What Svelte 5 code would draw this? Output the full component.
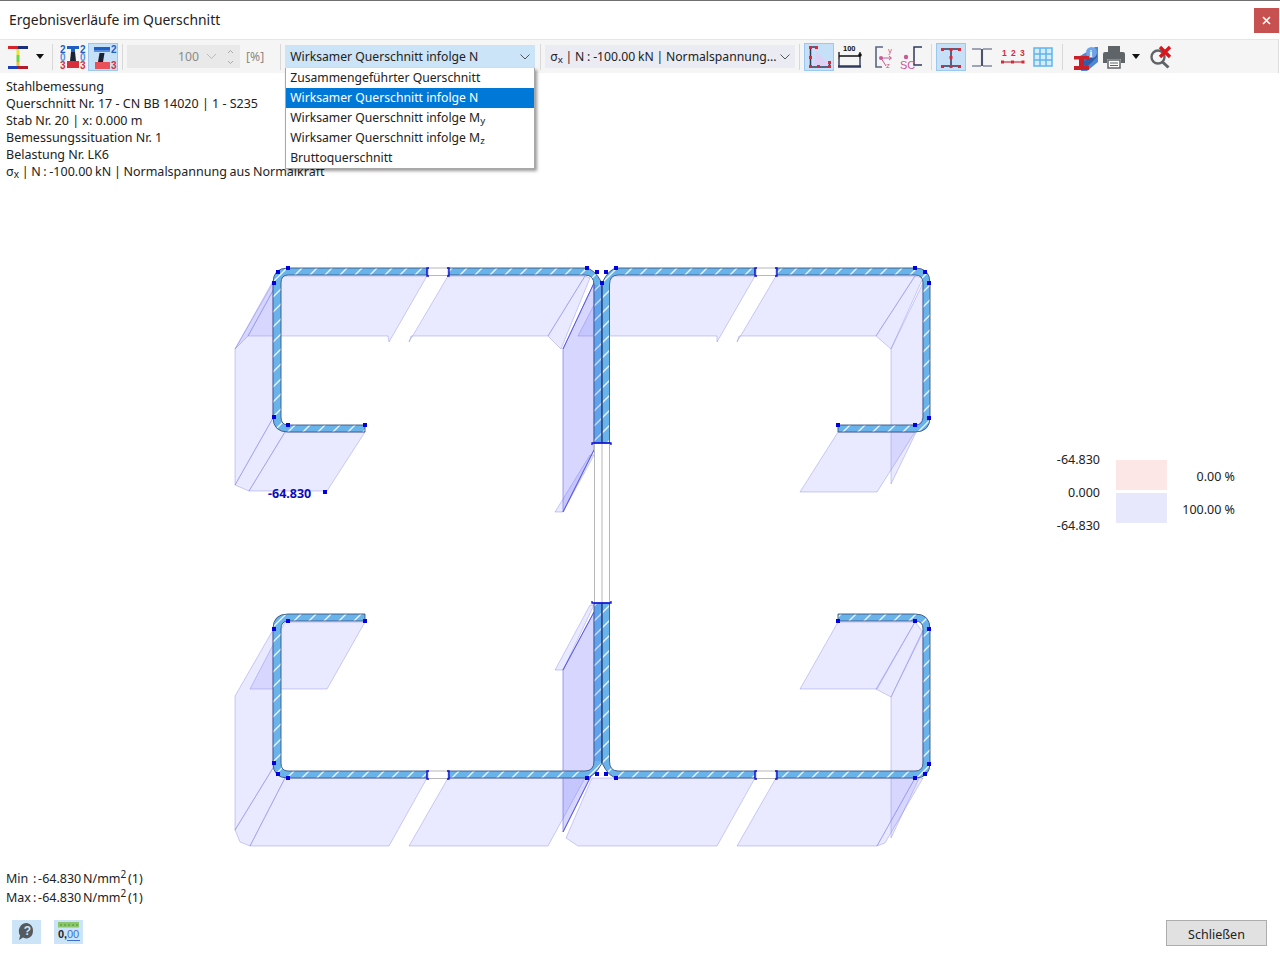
<script>
// section outlines, lower half of the cross section is the upper half mirrored at y = 523
const my = (y) => 1046 - y;

const sectionPaths = (f) => [
  `M427,${f(268)} H288 Q273,${f(268)} 273,${f(283)} V${f(417)} Q273,${f(432)} 288,${f(432)} H365 V${f(425)} H288 Q281,${f(425)} 281,${f(417)} V${f(283)} Q281,${f(275)} 288,${f(275)} H427 Z`,
  `M448,${f(268)} H585 Q594,${f(268)} 602,${f(283)} V${f(443)} H594 V${f(285)} Q594,${f(275)} 585,${f(275)} H448 Z`,
  `M755,${f(268)} H618 Q609,${f(268)} 602,${f(283)} V${f(443)} H609.5 V${f(285)} Q609.5,${f(275)} 618,${f(275)} H755 Z`,
  `M776,${f(268)} H915 Q930,${f(268)} 930,${f(283)} V${f(417)} Q930,${f(432)} 915,${f(432)} H838 V${f(425)} H915 Q923,${f(425)} 923,${f(417)} V${f(283)} Q923,${f(275)} 915,${f(275)} H776 Z`
];
const sections = [...sectionPaths((y) => y), ...sectionPaths(my)];

const stress = [
  '281,276 427,276 389,342 388,336 248,336',
  '273,283 235,349 235,485 273,418',
  '278,272 235,349 248,336 281,276',
  '273,418 235,485 249,491 285,432',
  '285,432 365,432 327,491 249,491',
  '448,276 585,276 548,336 411,336 409,342',
  '594,283 563,349 563,512 594,450',
  '594,283 563,349 563,512 594,450',
  '590,278 561,349 548,336 585,276',
  '594,455 563,512 555,512 590,455',
  '609,276 755,276 717,342 717,336 578,336',
  '776,276 915,276 876,336 739,336 737,342',
  '923,283 891,349 891,484 923,418',
  '923,278 891,349 876,336 915,276',
  '838,432 915,432 877,492 800,492',
  '285,622 365,622 327,689 250,689',
  '273,630 235,696 235,830 273,768',
  '273,768 235,830 240,842 250,846 285,778',
  '285,778 427,778 389,846 250,846',
  '448,778 585,778 548,846 409,846',
  '594,605 563,670 555,670 590,605',
  '594,612 563,670 563,832 594,770',
  '594,612 563,670 563,832 594,770',
  '566,838 592,778 755,778 717,846 578,846',
  '776,778 915,778 877,846 737,846',
  '923,630 891,697 891,838 923,770',
  '838,622 915,622 877,689 800,689',
  '915,622 923,632 891,697 876,689',
  '915,778 923,778 885,843 877,846'
];

const nodes = [
  [288, 268], [278, 272], [274, 283], [274, 417], [288, 425], [365, 425],
  [587, 268], [597, 272], [602, 283], [606, 272], [616, 268],
  [915, 268], [925, 272], [929, 283], [929, 418], [915, 425], [838, 425],
  [365, 621], [288, 621], [274, 629], [274, 763], [278, 774], [288, 778],
  [587, 778], [597, 774], [606, 774], [616, 778],
  [838, 621], [915, 621], [929, 629], [929, 764], [925, 774], [915, 778],
  [325, 492]
];

const flangeGaps = [
  [427, 268], [755, 268], [427, 771], [755, 771]
];

const infoLines = [
  'Stahlbemessung',
  'Querschnitt Nr. 17 - CN BB 14020 | 1 - S235',
  'Stab Nr. 20 | x: 0.000 m',
  'Bemessungssituation Nr. 1',
  'Belastung Nr. LK6'
];
</script>

<div class="window">
  <header class="titlebar">
    <span class="title">Ergebnisverläufe im Querschnitt</span>
    <button class="close" aria-label="Schließen">
      <svg width="9" height="9" viewBox="0 0 9 9"><path d="M1 1l7 7M8 1l-7 7" stroke="#fff" stroke-width="1.6"/></svg>
    </button>
  </header>

  <div class="toolbar">
    <svg class="ico first" width="24" height="26" viewBox="0 0 24 26">
      <path d="M1 2h10v3H1z" fill="#d8232a"/><path d="M11 2h10v3H11z" fill="#1d2f7a"/>
      <path d="M9.500 5h3v6h-3z" fill="#e8e23a"/><path d="M9.500 11h3v7h-3z" fill="#6ed24a"/><path d="M9.500 18h3v4h-3z" fill="#e8c03a"/>
      <path d="M1 22h10v3H1z" fill="#1d3fb8"/><path d="M11 22h10v3H11z" fill="#b01c2a"/>
    </svg>
    <span class="caret"></span>
    <span class="sep s1"></span>

    <svg class="ico second" width="26" height="26" viewBox="0 0 26 26">
      <path d="M7 2h12v3h-4v3h-4V5H7z" fill="#1f5fc4"/>
      <path d="M11 8h4l1 9h-6z" fill="#1c2233"/>
      <path d="M7 17h12v7H7z" fill="#d8303a"/>
      <text class="n"><tspan x="0" y="9" class="b">2</tspan><tspan x="0" y="17" class="l">0</tspan><tspan x="0" y="25" class="r">3</tspan></text>
      <text class="n"><tspan x="20" y="9" class="b">2</tspan><tspan x="20" y="17" class="l">0</tspan><tspan x="20" y="25" class="r">3</tspan></text>
    </svg>
    <button class="tool on third" aria-label="Querschnitt">
      <svg width="28" height="26" viewBox="0 0 28 26">
        <path d="M5 3h16v3h-5v1h-6V6H5z" fill="#1f5fc4"/><path d="M5 6h16v2H5z" fill="#5b8fdc"/>
        <path d="M10.500 9h5L14 18H9z" fill="#1c2233"/>
        <path d="M6 18h15v7H6z" fill="#e8505a"/>
        <text class="n"><tspan x="22" y="9" class="b">2</tspan><tspan x="22" y="25" class="r">3</tspan></text>
      </svg>
    </button>
    <span class="sep s2"></span>

    <div class="spinner">
      <span class="spin-val">100</span>
      <svg width="11" height="7" viewBox="0 0 11 7"><path d="M1 1l4.500 4.500L10 1" fill="none" stroke="#bbb"/></svg>
      <svg class="spin-arrows" width="7" height="16" viewBox="0 0 7 16"><path d="M1 4l2.500-2.500L6 4M1 12l2.500 2.500L6 12" fill="none" stroke="#aaa"/></svg>
    </div>
    <span class="unit">[%]</span>
    <span class="sep s3"></span>

    <div class="select-wrap">
      <div class="select open">
        <span>Wirksamer Querschnitt infolge N</span>
        <svg class="chev" width="10" height="6" viewBox="0 0 10 6"><path d="M.5.500L5 5 9.500.500" fill="none" stroke="#555"/></svg>
      </div>
      <ul class="dropdown">
        <li>Zusammengeführter Querschnitt</li>
        <li class="current">Wirksamer Querschnitt infolge N</li>
        <li>Wirksamer Querschnitt infolge M<sub>y</sub></li>
        <li>Wirksamer Querschnitt infolge M<sub>z</sub></li>
        <li>Bruttoquerschnitt</li>
      </ul>
    </div>
    <span class="sep s4"></span>
    <div class="select second-select">
      <span>σ<sub>x</sub> | N : -100.00 kN | Normalspannung...</span>
      <svg class="chev" width="10" height="6" viewBox="0 0 10 6"><path d="M.5.500L5 5 9.500.500" fill="none" stroke="#555"/></svg>
    </div>
    <span class="sep s5"></span>

    <button class="tool on" aria-label="Spannungen">
      <svg width="26" height="26" viewBox="0 0 26 26">
        <path d="M6 3h6L7 22h15v-3z" fill="#dcd0f4"/>
        <path d="M4 3h7M4.500 3v20h19v-5" fill="none" stroke="#303a5c" stroke-width="1.500"/>
        <g fill="#d42a3a"><rect x="3" y="2" width="3" height="3"/><rect x="9" y="2" width="3" height="3"/><rect x="3" y="12" width="3" height="3"/><rect x="3" y="21" width="3" height="3"/><rect x="11" y="21" width="3" height="3"/><rect x="22" y="21" width="3" height="3"/><rect x="22" y="17" width="3" height="3"/></g>
      </svg>
    </button>
    <svg class="ico dim" width="26" height="26" viewBox="0 0 26 26">
      <text x="7" y="7" class="hundred">100</text>
      <path d="M3 12h21M3 8v7M24 8v7" stroke="#111" stroke-width="1.300" fill="none"/>
      <circle cx="24" cy="11" r="1.800" fill="#111"/>
      <path d="M3 15v7M24 15v7" stroke="#303a5c" stroke-width="1.400"/>
      <path d="M2 22.500h23" stroke="#303a5c" stroke-width="2.500"/>
    </svg>
    <svg class="ico axis" width="20" height="26" viewBox="0 0 20 26">
      <path d="M9 3H2v20h6" fill="none" stroke="#5a6680" stroke-width="1.600"/>
      <path d="M7 14h10M15 12l2.500 2-2.500 2M7 14l5 8" stroke="#c85a96" fill="none"/>
      <circle cx="7" cy="14" r="2" fill="#c85a96"/>
      <text x="14" y="9" class="axis-t">y</text><text x="12" y="24" class="axis-t">z</text>
    </svg>
    <svg class="ico sc" width="24" height="26" viewBox="0 0 24 26">
      <path d="M22 3h-8v18h8" fill="none" stroke="#303a5c" stroke-width="1.500"/>
      <circle cx="6" cy="13" r="2.200" fill="#c85a96"/>
      <text x="0" y="25" class="sc-t">SC</text>
    </svg>
    <span class="sep s6"></span>

    <button class="tool on" aria-label="Steg">
      <svg width="26" height="26" viewBox="0 0 26 26">
        <path d="M4 5h18M4 22h18M13 5v17" stroke="#303a5c" stroke-width="1.500" fill="none"/>
        <g fill="#d42a3a"><rect x="3" y="4" width="3" height="3"/><rect x="20" y="4" width="3" height="3"/><rect x="11.500" y="4" width="3" height="3"/><rect x="11.500" y="12" width="3" height="3"/><rect x="3" y="21" width="3" height="3"/><rect x="20" y="21" width="3" height="3"/><rect x="11.500" y="21" width="3" height="3"/></g>
      </svg>
    </button>
    <svg class="ico web" width="24" height="26" viewBox="0 0 24 26">
      <path d="M2 5h9M13 5h9M2 22h9M13 22h9M11.500 5v17M12.500 5v17" stroke="#4a5470" stroke-width="1.100" fill="none"/>
    </svg>
    <svg class="ico nums" width="24" height="26" viewBox="0 0 24 26">
      <text x="1" y="12" class="num123">1</text><text x="10" y="12" class="num123">2</text><text x="19" y="12" class="num123">3</text>
      <path d="M1 18h22" stroke="#d42a3a" stroke-width="1.200"/>
      <g fill="#d42a3a"><rect x="0" y="16.500" width="3" height="3"/><rect x="10" y="16.500" width="3" height="3"/><rect x="20.500" y="16.500" width="3" height="3"/></g>
    </svg>
    <svg class="ico grid" width="20" height="20" viewBox="0 0 20 20">
      <rect x="1" y="1" width="18" height="18" fill="#d6ecfb" stroke="#5fb4ee" stroke-width="1.500"/>
      <path d="M7 1v18M13 1v18M1 7h18M1 13h18" stroke="#5fb4ee" stroke-width="1.500"/>
    </svg>
    <span class="sep s7"></span>

    <svg class="ico info" width="24" height="26" viewBox="0 0 24 26">
      <path d="M6 10L21 1h3v15L13 25H7z" fill="#4f86d4"/>
      <path d="M8 16l15-9v4L12 22z" fill="#2f5fa8"/>
      <circle cx="17.500" cy="6.500" r="5.500" fill="#6fa4ea"/>
      <text x="15.500" y="10.500" class="i-t">i</text>
      <path d="M0 10h15v3.500h-5V20h5v4H0v-4h5v-6.500H0z" fill="#c8202a"/>
    </svg>
    <svg class="ico printer" width="24" height="24" viewBox="0 0 24 24">
      <path d="M6 1h12v6H6z" fill="#5f6468"/>
      <path d="M1 9a2 2 0 0 1 2-2h18a2 2 0 0 1 2 2v9h-4v-4H5v4H1z" fill="#5f6468"/>
      <path d="M6 15h12v8H6z" fill="#fff" stroke="#5f6468" stroke-width="1.500"/>
      <path d="M8 18h8M8 20.500h8" stroke="#5f6468"/>
    </svg>
    <span class="caret small"></span>
    <svg class="ico search" width="24" height="24" viewBox="0 0 24 24">
      <circle cx="9" cy="12" r="6.500" fill="none" stroke="#5f6468" stroke-width="2.400"/>
      <path d="M13.500 17l6 5.500" stroke="#5f6468" stroke-width="3"/>
      <path d="M11 2l10 10M21 2L11 12" stroke="#d9161c" stroke-width="3.400"/>
    </svg>
  </div>

  <main class="main">
    <svg class="canvas" width="1280" height="887" viewBox="0 73 1280 887">
      <defs>
        <pattern id="hatch" width="15" height="15" patternUnits="userSpaceOnUse">
          <rect width="15" height="15" fill="#68b4ea"/>
          <path d="M-2 17L17 -2M-2 2L2 -2M13 17L17 13" stroke="#f0f8ff" stroke-width="1.300"/>
        </pattern>
      </defs>

      {#each stress as pts}
        <polygon points={pts} fill="rgba(118,118,255,0.16)" stroke="rgba(96,96,224,0.3)" stroke-width="1"/>
      {/each}
      <path d="M594 283L563 349M594 450L563 512M594 612L563 670M594 770L563 832" stroke="#5a5ae0" stroke-width="1"/>

      <!-- web gap -->
      <path d="M594.500 443V603M602 443V603M609.500 443V603" stroke="#b8b8b8" fill="none"/>
      {#each sections as d}
        <path {d} fill="url(#hatch)" stroke="#3a5580" stroke-width="0.900"/>
      {/each}
      <path d="M594 285h8v158h-8zM594 603h8v158h-8z" fill="rgba(50,70,240,0.16)"/>
      <path d="M602 283V443M602 603V763" stroke="#1f3a78" stroke-width="1"/>

      {#each flangeGaps as [x, y]}
        <rect x={x + 1} y={y} width="20" height="7.500" fill="#fff" stroke="#b8b8b8"/>
        <path d="M{x + 2} {y}h-2v8h2M{x + 20} {y}h2v8h-2" fill="none" stroke="#0a0ae0" stroke-width="1.300"/>
      {/each}
      <path d="M592 445v-2h19v2M592 601v2h19v-2" fill="none" stroke="#0a0ae0" stroke-width="1.300"/>

      {#each nodes as [x, y]}
        <rect x={x - 2} y={y - 2} width="4" height="4" fill="#0000e0"/>
      {/each}
      <text x="268" y="498" class="value">-64.830</text>
    </svg>

    <div class="info">
      {#each infoLines as line}
        <div>{line}</div>
      {/each}
      <div class="tight">σ<sub>x</sub> | N : -100.00 kN | Normalspannung aus Normalkraft</div>
    </div>

    <div class="legend">
      <div class="scale"><span>-64.830</span><span>0.000</span><span>-64.830</span></div>
      <div class="bars"><i class="pink"></i><i class="lilac"></i></div>
      <div class="shares"><span>0.00 %</span><span>100.00 %</span></div>
    </div>

    <div class="stats">
      <div><span class="lbl">Min</span>: -64.830 N/mm<sup>2</sup> (1)</div>
      <div><span class="lbl">Max</span>: -64.830 N/mm<sup>2</sup> (1)</div>
    </div>

    <footer class="footer">
      <button class="foot-btn" aria-label="Hilfe">
        <svg width="20" height="20" viewBox="0 0 20 20">
          <path d="M10 1a8 8 0 0 1 0 15.500c-1.500 0-2.800-.3-4-1L2 18l1.200-4.500A8 8 0 0 1 10 1z" fill="#55595e"/>
          <text x="6.800" y="13" class="help-t">?</text>
        </svg>
      </button>
      <button class="foot-btn" aria-label="Dezimalstellen">
        <svg width="24" height="22" viewBox="0 0 24 22">
          <rect x="1" y="1" width="21" height="5.500" fill="#8cc66a"/>
          <path d="M4 3v2M8 3v2M12 3v2M16 3v2M20 3v2" stroke="#4f8f3a"/>
          <text x="1" y="17" class="dec-a">0,</text><text x="10" y="17" class="dec-b">00</text>
          <path d="M10 19.500h13" stroke="#3a6fd0"/>
        </svg>
      </button>
      <button class="close-btn">Schließen</button>
    </footer>
  </main>
</div>

<style>
  :global(body) {
    margin: 0;
    background: #fff;
  }

  .window {
    width: 1280px;
    height: 960px;
    display: flex;
    flex-direction: column;
    box-sizing: border-box;
    border-top: 1px solid #707070;
    font-family: "Noto Sans", "Open Sans", sans-serif;
    font-size: 12.5px;
    color: #222;
    overflow: hidden;
  }

  sub {
    font-size: 0.8em;
    vertical-align: -2px;
    line-height: 0;
  }

  button {
    font: inherit;
    padding: 0;
    border: none;
    background: none;
  }

  .titlebar {
    height: 38px;
    display: flex;
    align-items: center;
    justify-content: space-between;
    padding-left: 9px;
    box-sizing: border-box;
    flex: none;
  }

  .title {
    font-size: 13.9px;
    color: #222;
    margin-bottom: 2px;
  }

  .close {
    width: 25px;
    height: 25px;
    margin-right: 1px;
    background: #c75050;
    display: flex;
    align-items: center;
    justify-content: center;
  }

  .toolbar {
    height: 34px;
    flex: none;
    display: flex;
    align-items: center;
    box-sizing: border-box;
    background: #f5f5f5;
    border-top: 1px solid #e6e6e6;
    border-right: 1px solid #ddd;
    margin-right: 1px;
    font-size: 12.2px;
  }

  .ico {
    flex: none;
  }

  .n {
    font: bold 10px "Liberation Sans", sans-serif;
  }
  .b { fill: #1f5fc4; }
  .l { fill: #5b8fdc; }
  .r { fill: #d8303a; }

  .hundred {
    font: bold 7.500px "Liberation Sans", sans-serif;
    fill: #111;
  }
  .axis-t {
    font: 8px "Liberation Sans", sans-serif;
    fill: #c85a96;
  }
  .sc-t {
    font: 11px "Liberation Sans", sans-serif;
    fill: #c85a96;
  }
  .num123 {
    font: bold 8.500px "Liberation Sans", sans-serif;
    fill: #d42a3a;
  }
  .i-t {
    font: bold 10px "Liberation Serif", serif;
    fill: #fff;
  }
  .help-t {
    font: bold 12px "Liberation Sans", sans-serif;
    fill: #cce4f7;
  }
  .dec-a {
    font: bold 11px "Liberation Sans", sans-serif;
    fill: #222;
  }
  .dec-b {
    font: 11px "Liberation Sans", sans-serif;
    fill: #3a6fd0;
  }

  .first { margin-left: 7px; }
  .second { margin-left: 7px; }
  .third { margin-left: 2px; }

  .caret {
    width: 0;
    height: 0;
    margin-left: 5px;
    border-left: 4.500px solid transparent;
    border-right: 4.500px solid transparent;
    border-top: 5px solid #111;
    flex: none;
  }
  .caret.small {
    margin-left: 6px;
  }

  .sep {
    width: 1px;
    height: 26px;
    background: #d8d8d8;
    flex: none;
  }
  .s1 { margin-left: 8px; }
  .s2 { margin-left: 4px; }
  .s3 { margin: 0 4px 0 16px; }
  .s4 { margin: 0 4px 0 5px; }
  .s5 { margin: 0 4px 0 4px; }
  .s6 { margin: 0 4px 0 7px; }
  .s7 { margin: 0 5px 0 9px; }

  .tool {
    width: 30px;
    height: 28px;
    flex: none;
    display: flex;
    align-items: center;
    justify-content: center;
    box-sizing: border-box;
  }
  .tool.on {
    background: #c6e0f8;
    border: 1px solid #9cc8ee;
  }

  .dim { margin-left: 2px; }
  .axis { margin-left: 12px; }
  .sc { margin-left: 6px; }
  .web { margin-left: 4px; }
  .nums { margin-left: 7px; }
  .grid { margin-left: 8px; }
  .printer { margin-left: 4px; }
  .search { margin-left: 9px; }

  .spinner {
    width: 113px;
    height: 23px;
    margin-left: 4px;
    background: #e9e9e9;
    display: flex;
    align-items: center;
    justify-content: flex-end;
    gap: 7px;
    box-sizing: border-box;
    padding-right: 6px;
    flex: none;
  }
  .spin-val {
    color: #8a8a8a;
  }
  .spin-arrows {
    margin-left: 3px;
  }
  .unit {
    margin-left: 6px;
    color: #8a8a8a;
    flex: none;
  }

  .select-wrap {
    position: relative;
    width: 250px;
    flex: none;
  }
  .select {
    height: 23px;
    display: flex;
    align-items: center;
    justify-content: space-between;
    box-sizing: border-box;
    padding: 0 5px;
    white-space: nowrap;
    color: #222;
  }
  .select.open {
    background: #cce4f7;
  }
  .chev {
    flex: none;
  }
  .second-select {
    width: 250px;
    flex: none;
    background: #ebebf3;
    word-spacing: -0.4px;
  }

  .dropdown {
    position: absolute;
    top: 23px;
    left: 0;
    width: 250px;
    margin: 0;
    padding: 0;
    box-sizing: border-box;
    list-style: none;
    background: #fff;
    border: 1px solid #a8a8a8;
    border-top: none;
    box-shadow: 2px 2px 3px rgba(0, 0, 0, 0.4);
    z-index: 5;
  }
  .dropdown li {
    height: 20px;
    line-height: 20px;
    padding-left: 4px;
    white-space: nowrap;
  }
  .dropdown li.current {
    background: #0078d7;
    color: #fff;
  }

  .main {
    flex: 1;
    position: relative;
    display: flex;
    flex-direction: column;
    box-sizing: border-box;
  }

  .canvas {
    position: absolute;
    top: 0;
    left: 0;
  }
  .value {
    font: bold 12.500px "Noto Sans", sans-serif;
    fill: #0c0cb8;
  }

  .info {
    position: relative;
    padding: 5px 0 0 6px;
    line-height: 17px;
  }
  .tight {
    word-spacing: -0.6px;
  }

  .legend {
    position: absolute;
    left: 1050px;
    top: 378px;
    display: flex;
    line-height: 17px;
  }
  .scale {
    width: 50px;
    height: 83px;
    display: flex;
    flex-direction: column;
    justify-content: space-between;
    text-align: right;
  }
  .bars {
    margin: 9px 0 0 16px;
    width: 51px;
    display: flex;
    flex-direction: column;
    gap: 3px;
  }
  .bars i {
    display: block;
    height: 30px;
  }
  .pink { background: #fde6e6; }
  .lilac { background: #e8e8fd; }
  .shares {
    width: 68px;
    margin-top: 17px;
    display: flex;
    flex-direction: column;
    gap: 16px;
    text-align: right;
  }

  .stats {
    position: relative;
    margin-top: auto;
    padding-left: 6px;
    line-height: 19px;
    word-spacing: -1.500px;
  }
  .lbl {
    display: inline-block;
    width: 27px;
  }
  sup {
    font-size: 0.8em;
    line-height: 0;
  }

  .footer {
    position: relative;
    display: flex;
    align-items: flex-start;
    height: 53px;
    padding: 13px 13px 0 12px;
    box-sizing: border-box;
    gap: 13px;
  }
  .foot-btn {
    width: 29px;
    height: 24px;
    background: #cce4f7;
    display: flex;
    align-items: center;
    justify-content: center;
  }
  .close-btn {
    margin-left: auto;
    width: 101px;
    height: 26px;
    margin-top: 0;
    padding-top: 2px;
    background: #e1e1e1;
    border: 1px solid #adadad;
    color: #222;
  }
</style>
